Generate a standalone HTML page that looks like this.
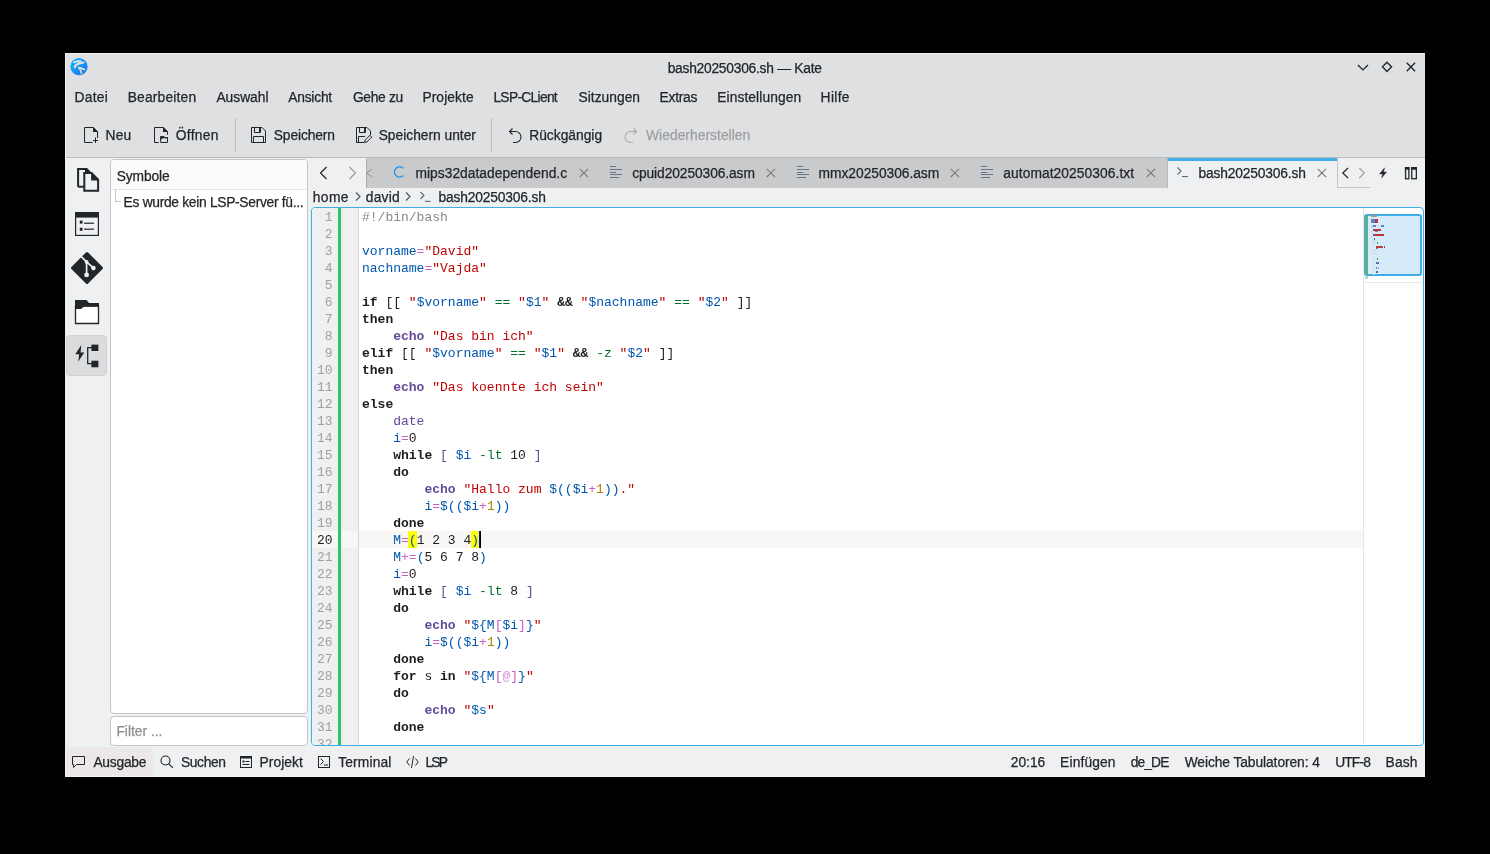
<!DOCTYPE html>
<html><head><meta charset="utf-8"><title>Kate</title>
<style>
html,body{margin:0;padding:0;background:#000;width:1490px;height:854px;overflow:hidden;}
body{position:relative;font-family:"Liberation Sans",sans-serif;}
#root{position:absolute;left:0;top:0;width:1490px;height:854px;will-change:transform;}
.t{position:absolute;white-space:pre;line-height:20px;height:20px;font-family:"Liberation Sans",sans-serif;-webkit-text-stroke:0.25px currentColor;}
.code{position:absolute;white-space:pre;font-family:"Liberation Mono",monospace;}
svg{overflow:visible}
</style></head><body>
<div id="root"><div style="position:absolute;left:65px;top:53px;width:1360px;height:724px;background:#eff0f1;"></div>
<div style="position:absolute;left:65px;top:53px;width:1360px;height:105px;background:#dee0e2;"></div>
<div style="position:absolute;left:65px;top:157px;width:1360px;height:1px;background:#b9bbbd;"></div>
<div style="position:absolute;left:65px;top:53px;width:1360px;height:1px;background:#eceef0;"></div>
<div style="position:absolute;left:65px;top:53px;width:1px;height:724px;background:#eceef0;"></div>
<svg style="position:absolute;left:69px;top:57px;" width="20" height="20" viewBox="0 0 20 20"><defs><linearGradient id="kg" x1="0" y1="0" x2="1" y2="1"><stop offset="0" stop-color="#17b6fb"/><stop offset="1" stop-color="#1a6ff0"/></linearGradient></defs>
<circle cx="10" cy="9.6" r="8.6" fill="url(#kg)"/>
<g fill="none" stroke-linecap="round"><path d="M5 5.3 Q8.2 3.8 11.6 4.1" stroke="#e6e7e8" stroke-width="1.8"/>
<path d="M10.3 4.6 L9.6 6.2" stroke="#cfcfcf" stroke-width="1.6"/>
<path d="M5.8 10.3 Q6.4 7.6 9.5 6.7 Q12.4 5.8 14.6 5.4" stroke="#e4e5e6" stroke-width="2"/>
<path d="M9.6 10.6 Q12.6 11.3 15.4 12.6" stroke="#e2e3e4" stroke-width="1.6"/>
<path d="M10.4 11.2 Q12 13.4 12.3 16" stroke="#d6d3d0" stroke-width="1.9"/></g></svg>
<div class="t" style="left:667.70px;top:58.60px;font-size:13.8px;letter-spacing:-0.251px;color:#232629;">bash20250306.sh — Kate</div>
<svg style="position:absolute;left:1355px;top:60px;" width="15" height="15" viewBox="0 0 15 15"><path d="M2.9 4.9 L7.95 9.9 L13 4.9" fill="none" stroke="#232629" stroke-width="1.35"/></svg>
<svg style="position:absolute;left:1380px;top:60px;" width="15" height="15" viewBox="0 0 15 15"><path d="M7 2.25 L11.6 6.85 L7 11.45 L2.4 6.85 Z" fill="none" stroke="#232629" stroke-width="1.35"/></svg>
<svg style="position:absolute;left:1404px;top:60px;" width="15" height="15" viewBox="0 0 15 15"><path d="M2.7 2.75 L11.1 11.15 M11.1 2.75 L2.7 11.15" fill="none" stroke="#232629" stroke-width="1.35"/></svg>
<div class="t" style="left:74.60px;top:88.40px;font-size:13.8px;letter-spacing:0.262px;color:#232629;">Datei</div>
<div class="t" style="left:127.70px;top:88.40px;font-size:13.8px;letter-spacing:0.186px;color:#232629;">Bearbeiten</div>
<div class="t" style="left:216.40px;top:88.40px;font-size:13.8px;letter-spacing:-0.011px;color:#232629;">Auswahl</div>
<div class="t" style="left:288.20px;top:88.40px;font-size:13.8px;letter-spacing:-0.204px;color:#232629;">Ansicht</div>
<div class="t" style="left:352.91px;top:88.40px;font-size:13.8px;letter-spacing:-0.313px;color:#232629;">Gehe zu</div>
<div class="t" style="left:422.40px;top:88.40px;font-size:13.8px;letter-spacing:0.093px;color:#232629;">Projekte</div>
<div class="t" style="left:493.40px;top:88.40px;font-size:13.8px;letter-spacing:-0.694px;color:#232629;">LSP-CLient</div>
<div class="t" style="left:578.48px;top:88.40px;font-size:13.8px;letter-spacing:0.022px;color:#232629;">Sitzungen</div>
<div class="t" style="left:659.60px;top:88.40px;font-size:13.8px;letter-spacing:-0.267px;color:#232629;">Extras</div>
<div class="t" style="left:717.30px;top:88.40px;font-size:13.8px;letter-spacing:0.078px;color:#232629;">Einstellungen</div>
<div class="t" style="left:820.60px;top:88.40px;font-size:13.8px;letter-spacing:0.331px;color:#232629;">Hilfe</div>
<svg style="position:absolute;left:83px;top:127px;" width="16" height="16" viewBox="0 0 16 16"><path d="M1.5 15.5 V0.5 H10.5 L14.5 4.5 V11" fill="none" stroke="#232629" stroke-width="1"/>
<path d="M1.5 15.5 H9.5" fill="none" stroke="#232629" stroke-width="1"/>
<path d="M10 0 L15 5 L10 5 Z" fill="#232629"/>
<path d="M12.5 10.5 V16 M10 13.5 H15" stroke="#232629" stroke-width="1"/></svg>
<div class="t" style="left:105.50px;top:126.20px;font-size:13.8px;letter-spacing:0.239px;color:#232629;">Neu</div>
<svg style="position:absolute;left:153px;top:127px;" width="17" height="16" viewBox="0 0 17 16"><path d="M1.5 15.5 V0.5 H10.5 L14.5 4.5 V7.7" fill="none" stroke="#232629" stroke-width="1"/>
<path d="M1.5 15.5 H5.8" fill="none" stroke="#232629" stroke-width="1"/>
<path d="M10 0 L15 5 L10 5 Z" fill="#232629"/>
<path d="M7.7 15.5 V9.7 H10.8 L11.8 10.7 H14.5 V15.5 Z" fill="none" stroke="#232629" stroke-width="1"/>
<path d="M7.2 9.2 H11 L12 10.2 H15 V11.2 H9.6 L8.2 12.6 H7.2 Z" fill="#232629"/></svg>
<div class="t" style="left:175.78px;top:126.20px;font-size:13.8px;letter-spacing:0.305px;color:#232629;">Öffnen</div>
<div style="position:absolute;left:235px;top:118px;width:1px;height:34px;background:#b9bbbd;"></div>
<svg style="position:absolute;left:250px;top:127px;" width="17" height="16" viewBox="0 0 17 16"><path d="M1.5 0.5 H12 L15.5 4 V15.5 H1.5 Z" fill="none" stroke="#232629" stroke-width="1"/>
<path d="M4.5 0.5 V5.5 H10.5 V0.5" fill="none" stroke="#232629" stroke-width="1"/>
<path d="M9 1 H11 V5 H9Z" fill="#232629"/>
<path d="M3.5 15.5 V9.5 H13.5 V15.5" fill="none" stroke="#232629" stroke-width="1"/></svg>
<div class="t" style="left:273.78px;top:126.20px;font-size:13.8px;letter-spacing:-0.123px;color:#232629;">Speichern</div>
<svg style="position:absolute;left:355px;top:127px;" width="18" height="16" viewBox="0 0 18 16"><path d="M9 15.5 H1.5 V0.5 H12 L15.5 4 V8" fill="none" stroke="#232629" stroke-width="1"/>
<path d="M4.5 0.5 V5.5 H10.5 V0.5" fill="none" stroke="#232629" stroke-width="1"/>
<path d="M9 1 H11 V5 H9Z" fill="#232629"/>
<path d="M3.5 15.5 V9.5 H10" fill="none" stroke="#232629" stroke-width="1"/>
<path d="M9.5 15.5 L10.2 13 L15 8.3 L16.8 10.1 L12 14.8 Z" fill="none" stroke="#232629" stroke-width="1"/></svg>
<div class="t" style="left:378.68px;top:126.20px;font-size:13.8px;letter-spacing:-0.009px;color:#232629;">Speichern unter</div>
<div style="position:absolute;left:491px;top:118px;width:1px;height:34px;background:#b9bbbd;"></div>
<svg style="position:absolute;left:507px;top:126px;" width="16" height="18" viewBox="0 0 16 18"><path d="M3 5.5 H8.5 A5.5 5.5 0 0 1 8.5 16.5 H6" fill="none" stroke="#232629" stroke-width="1.1"/>
<path d="M5.5 2.5 L2.5 5.5 L5.5 8.5" fill="none" stroke="#232629" stroke-width="1.1"/></svg>
<div class="t" style="left:529.20px;top:126.20px;font-size:13.8px;letter-spacing:0.004px;color:#232629;">Rückgängig</div>
<svg style="position:absolute;left:623px;top:126px;" width="16" height="18" viewBox="0 0 16 18"><path d="M13 5.5 H7.5 A5.5 5.5 0 0 0 7.5 16.5 H10" fill="none" stroke="#a7a9ab" stroke-width="1.1"/>
<path d="M10.5 2.5 L13.5 5.5 L10.5 8.5" fill="none" stroke="#a7a9ab" stroke-width="1.1"/></svg>
<div class="t" style="left:646.03px;top:126.20px;font-size:13.8px;letter-spacing:0.046px;color:#9d9fa1;">Wiederherstellen</div>
<svg style="position:absolute;left:70px;top:162px;" width="36" height="36" viewBox="0 0 36 36"><path d="M8.1 24.7 V7.1 H16.6 L20.3 10.8" fill="none" stroke="#232629" stroke-width="2"/>
<path d="M8.1 24.7 H14" fill="none" stroke="#232629" stroke-width="2"/>
<path d="M15 6.1 L20.8 11.1 H15 Z" fill="#232629"/>
<path d="M14.3 11.1 H21.6 L28.1 17.6 V28.7 H14.3 Z" fill="#eff0f1" stroke="#232629" stroke-width="2"/>
<path d="M21.1 10.1 L29.1 18.1 V18.6 H21.1 Z" fill="#232629"/></svg>
<svg style="position:absolute;left:75px;top:212px;" width="24" height="24" viewBox="0 0 24 24"><rect x="0.6" y="0.6" width="22.8" height="22.8" fill="none" stroke="#232629" stroke-width="1.2"/>
<rect x="0" y="0" width="24" height="5.6" fill="#232629"/>
<rect x="4.8" y="8.6" width="2.7" height="3" fill="#232629"/><rect x="9" y="10.6" width="10" height="1.2" fill="#232629"/>
<rect x="4.8" y="15.8" width="2.7" height="3" fill="#232629"/><rect x="9" y="16.6" width="10" height="1.2" fill="#232629"/></svg>
<svg style="position:absolute;left:70px;top:251px;" width="34" height="34" viewBox="0 0 34 34"><path d="M17 2.5 L31.5 17 L17 31.5 L2.5 17 Z" fill="#232629" stroke="#232629" stroke-width="3" stroke-linejoin="round"/>
<path d="M10.8 5.2 L16.6 10.8 V23.6 M16.6 10.8 L23.3 16.9" fill="none" stroke="#eff0f1" stroke-width="1.7"/>
<circle cx="16.6" cy="10.9" r="1.9" fill="#eff0f1"/><circle cx="23.4" cy="17.1" r="2.3" fill="#eff0f1"/><circle cx="16.6" cy="23.9" r="2.4" fill="#eff0f1"/></svg>
<svg style="position:absolute;left:74px;top:299px;" width="26" height="26" viewBox="0 0 26 26"><path d="M1.5 7 H24.5 V24.5 H1.5 Z" fill="#ffffff" stroke="#232629" stroke-width="1.3"/>
<path d="M1 1 H12.5 L15 4 H25 V7.5 H10.2 L7 10 H1 Z" fill="#232629"/></svg>
<div style="position:absolute;left:66px;top:335px;width:41px;height:41px;background:#dadcde;border:1px solid #cfd1d3;border-radius:4px;box-sizing:border-box;"></div>
<svg style="position:absolute;left:74px;top:343px;" width="26" height="26" viewBox="0 0 26 26"><path d="M7.3 2 L1.3 11.3 H5.1 L4.3 18.4 L10.3 9.5 H6.6 Z" fill="#232629"/>
<path d="M18 4.7 H13.7 V20.7 H18" fill="none" stroke="#232629" stroke-width="1.3"/>
<rect x="17.4" y="1.6" width="7" height="6.4" fill="#232629"/><rect x="17.4" y="17.7" width="7" height="6.6" fill="#232629"/></svg>
<div style="position:absolute;left:110px;top:159px;width:198px;height:555px;background:#ffffff;border:1px solid #c3c5c7;border-radius:4px;box-sizing:border-box;"></div>
<div style="position:absolute;left:111px;top:160px;width:196px;height:29px;background:#fbfbfb;border-radius:3px 3px 0 0;"></div>
<div style="position:absolute;left:111px;top:189px;width:196px;height:1px;background:#e4e5e6;"></div>
<div class="t" style="left:116.78px;top:166.60px;font-size:13.8px;letter-spacing:-0.123px;color:#232629;">Symbole</div>
<div style="position:absolute;left:115px;top:190px;width:1px;height:12px;background:#c8c9ca;"></div>
<div style="position:absolute;left:115px;top:201px;width:6px;height:1px;background:#c8c9ca;"></div>
<div class="t" style="left:123.60px;top:193.40px;font-size:13.8px;letter-spacing:-0.300px;color:#232629;">Es wurde kein LSP-Server fü...</div>
<div style="position:absolute;left:110px;top:716px;width:198px;height:30px;background:#ffffff;border:1px solid #c3c5c7;border-radius:4px;box-sizing:border-box;"></div>
<div class="t" style="left:116.40px;top:722.30px;font-size:13.8px;letter-spacing:-0.001px;color:#8d8f91;">Filter ...</div>
<div style="position:absolute;left:366px;top:158px;width:802px;height:30px;background:#c9cacc;"></div>
<svg style="position:absolute;left:318px;top:165px;" width="12" height="16" viewBox="0 0 12 16"><path d="M8.5 2 L2.5 8 L8.5 14" fill="none" stroke="#232629" stroke-width="1.2"/></svg>
<svg style="position:absolute;left:346px;top:165px;" width="12" height="16" viewBox="0 0 12 16"><path d="M3.5 2 L9.5 8 L3.5 14" fill="none" stroke="#9a9c9e" stroke-width="1.2"/></svg>
<svg style="position:absolute;left:366px;top:167px;" width="8" height="12" viewBox="0 0 8 12"><path d="M5.8 2 L0.6 6 L5.8 9.8" fill="none" stroke="#8f9193" stroke-width="1"/></svg>
<div style="position:absolute;left:366px;top:159px;width:1px;height:29px;background:#a9abad;"></div>
<svg style="position:absolute;left:392px;top:165px;" width="14" height="14" viewBox="0 0 14 14"><path d="M11.3 3.2 A5.2 5.2 0 1 0 11.3 10.6" fill="none" stroke="#1d99f3" stroke-width="1.4"/></svg>
<div class="t" style="left:415.50px;top:163.70px;font-size:13.8px;letter-spacing:0.023px;color:#232629;">mips32datadependend.c</div>
<svg style="position:absolute;left:578px;top:167px;" width="12" height="12" viewBox="0 0 12 12"><path d="M1.8 1.8 L10 10 M10 1.8 L1.8 10" fill="none" stroke="#7b7d7f" stroke-width="1.1"/></svg>
<svg style="position:absolute;left:610px;top:166px;" width="13" height="12" viewBox="0 0 13 12"><rect x="0" y="0" width="6" height="1" fill="#63768a"/><rect x="0" y="3" width="12" height="1" fill="#63768a"/><rect x="0" y="6" width="6" height="1" fill="#63768a"/><rect x="0" y="8" width="12" height="1" fill="#63768a"/><rect x="0" y="11" width="9" height="1" fill="#63768a"/></svg>
<div class="t" style="left:632.15px;top:163.70px;font-size:13.8px;letter-spacing:-0.093px;color:#232629;">cpuid20250306.asm</div>
<svg style="position:absolute;left:765px;top:167px;" width="12" height="12" viewBox="0 0 12 12"><path d="M1.8 1.8 L10 10 M10 1.8 L1.8 10" fill="none" stroke="#7b7d7f" stroke-width="1.1"/></svg>
<svg style="position:absolute;left:797px;top:166px;" width="13" height="12" viewBox="0 0 13 12"><rect x="0" y="0" width="6" height="1" fill="#63768a"/><rect x="0" y="3" width="12" height="1" fill="#63768a"/><rect x="0" y="6" width="6" height="1" fill="#63768a"/><rect x="0" y="8" width="12" height="1" fill="#63768a"/><rect x="0" y="11" width="9" height="1" fill="#63768a"/></svg>
<div class="t" style="left:818.60px;top:163.70px;font-size:13.8px;letter-spacing:-0.039px;color:#232629;">mmx20250306.asm</div>
<svg style="position:absolute;left:949px;top:167px;" width="12" height="12" viewBox="0 0 12 12"><path d="M1.8 1.8 L10 10 M10 1.8 L1.8 10" fill="none" stroke="#7b7d7f" stroke-width="1.1"/></svg>
<svg style="position:absolute;left:981px;top:166px;" width="13" height="12" viewBox="0 0 13 12"><rect x="0" y="0" width="6" height="1" fill="#63768a"/><rect x="0" y="3" width="12" height="1" fill="#63768a"/><rect x="0" y="6" width="6" height="1" fill="#63768a"/><rect x="0" y="8" width="12" height="1" fill="#63768a"/><rect x="0" y="11" width="9" height="1" fill="#63768a"/></svg>
<div class="t" style="left:1003.25px;top:163.70px;font-size:13.8px;letter-spacing:0.071px;color:#232629;">automat20250306.txt</div>
<svg style="position:absolute;left:1145px;top:167px;" width="12" height="12" viewBox="0 0 12 12"><path d="M1.8 1.8 L10 10 M10 1.8 L1.8 10" fill="none" stroke="#7b7d7f" stroke-width="1.1"/></svg>
<div style="position:absolute;left:1167px;top:158px;width:171px;height:30px;background:#eff0f1;"></div>
<div style="position:absolute;left:1167px;top:158px;width:171px;height:3px;background:#3daee9;border-radius:2px 2px 0 0;"></div>
<div style="position:absolute;left:1337px;top:158px;width:1px;height:30px;background:#c3c5c7;"></div>
<div style="position:absolute;left:1167px;top:160px;width:1px;height:28px;background:#b9bbbd;"></div>
<div style="position:absolute;left:1337px;top:187px;width:33px;height:1px;background:#c3c5c7;"></div>
<svg style="position:absolute;left:1176px;top:166px;" width="14" height="13" viewBox="0 0 14 13"><path d="M1.5 1.5 L5 5 L1.5 8.5" fill="none" stroke="#5a6b7c" stroke-width="1.1"/><rect x="6" y="10" width="6" height="1.1" fill="#5a6b7c"/></svg>
<div class="t" style="left:1198.60px;top:163.70px;font-size:13.8px;letter-spacing:-0.173px;color:#232629;">bash20250306.sh</div>
<svg style="position:absolute;left:1316px;top:167px;" width="12" height="12" viewBox="0 0 12 12"><path d="M1.8 1.8 L10 10 M10 1.8 L1.8 10" fill="none" stroke="#7b7d7f" stroke-width="1.1"/></svg>
<svg style="position:absolute;left:1340px;top:165px;" width="12" height="16" viewBox="0 0 12 16"><path d="M8 3 L2.8 8 L8 13" fill="none" stroke="#232629" stroke-width="1.2"/></svg>
<svg style="position:absolute;left:1356px;top:165px;" width="12" height="16" viewBox="0 0 12 16"><path d="M3.3 3 L8.3 8 L3.3 13" fill="none" stroke="#9a9c9e" stroke-width="1.1"/></svg>
<svg style="position:absolute;left:1378px;top:167px;" width="10" height="12" viewBox="0 0 10 12"><path d="M6.6 0.8 L1.5 6.9 H4.6 L3.6 11 L8.5 5 H5.5 Z" fill="#232629" stroke="#232629" stroke-width="0.4" stroke-linejoin="round"/></svg>
<svg style="position:absolute;left:1404px;top:167px;" width="14" height="13" viewBox="0 0 14 13"><rect x="1.55" y="0.75" width="3.3" height="11" fill="none" stroke="#232629" stroke-width="1.3"/><rect x="0.9" y="0.1" width="4.6" height="2.6" fill="#232629"/><rect x="7.75" y="0.75" width="4.6" height="11" fill="none" stroke="#232629" stroke-width="1.3"/><rect x="7.1" y="0.1" width="5.9" height="2.6" fill="#232629"/></svg>
<div class="t" style="left:312.73px;top:187.80px;font-size:13.8px;letter-spacing:0.429px;color:#232629;">home</div>
<svg style="position:absolute;left:354px;top:190px;" width="8" height="12" viewBox="0 0 8 12"><path d="M2 2.5 L6 6.5 L2 10.5" fill="none" stroke="#4d5358" stroke-width="1.1"/></svg>
<div class="t" style="left:365.85px;top:187.80px;font-size:13.8px;letter-spacing:0.192px;color:#232629;">david</div>
<svg style="position:absolute;left:404px;top:190px;" width="8" height="12" viewBox="0 0 8 12"><path d="M2 2.5 L6 6.5 L2 10.5" fill="none" stroke="#4d5358" stroke-width="1.1"/></svg>
<svg style="position:absolute;left:419px;top:191px;" width="13" height="12" viewBox="0 0 13 12"><path d="M1.5 1 L5 4.5 L1.5 8" fill="none" stroke="#5a6b7c" stroke-width="1.1"/><rect x="6" y="9.8" width="5.5" height="1.1" fill="#5a6b7c"/></svg>
<div class="t" style="left:438.40px;top:187.80px;font-size:13.8px;letter-spacing:-0.158px;color:#232629;">bash20250306.sh</div>
<div style="position:absolute;left:66px;top:747px;width:87px;height:29px;background:#ebe8e7;border-radius:4px;"></div>
<svg style="position:absolute;left:72px;top:756px;" width="14" height="13" viewBox="0 0 14 13"><path d="M0.5 0.5 H12.5 V8.5 H4.5 L1.5 11.5 V8.5 H0.5 Z" fill="none" stroke="#232629" stroke-width="1"/></svg>
<div class="t" style="left:93.40px;top:753.20px;font-size:13.8px;letter-spacing:-0.237px;color:#232629;">Ausgabe</div>
<svg style="position:absolute;left:160px;top:755px;" width="14" height="14" viewBox="0 0 14 14"><circle cx="5.5" cy="5.5" r="4.5" fill="none" stroke="#232629" stroke-width="1.1"/><path d="M8.8 8.8 L12.8 12.8" stroke="#232629" stroke-width="1.2"/></svg>
<div class="t" style="left:180.88px;top:753.20px;font-size:13.8px;letter-spacing:-0.333px;color:#232629;">Suchen</div>
<svg style="position:absolute;left:240px;top:756px;" width="12" height="12" viewBox="0 0 12 12"><rect x="0.5" y="0.5" width="11" height="11" fill="none" stroke="#232629" stroke-width="1"/><rect x="0" y="0" width="12" height="2.5" fill="#232629"/><rect x="2.5" y="4.5" width="2" height="2" fill="#232629"/><rect x="5.5" y="5" width="4" height="1" fill="#232629"/><rect x="2.5" y="8" width="7" height="1" fill="#232629"/></svg>
<div class="t" style="left:259.50px;top:753.20px;font-size:13.8px;letter-spacing:0.076px;color:#232629;">Projekt</div>
<svg style="position:absolute;left:318px;top:756px;" width="12" height="12" viewBox="0 0 12 12"><rect x="0.5" y="0.5" width="11" height="11" fill="none" stroke="#232629" stroke-width="1"/><path d="M2.5 2.5 L5.5 5.5 L2.5 8.5" fill="none" stroke="#232629" stroke-width="1"/><rect x="6" y="8.5" width="4" height="1" fill="#232629"/></svg>
<div class="t" style="left:338.22px;top:753.20px;font-size:13.8px;letter-spacing:0.154px;color:#232629;">Terminal</div>
<svg style="position:absolute;left:406px;top:755px;" width="13" height="14" viewBox="0 0 13 14"><path d="M3.5 3.5 L0.8 7 L3.5 10.5 M9.5 3.5 L12.2 7 L9.5 10.5 M7.5 1 L5.5 13" fill="none" stroke="#232629" stroke-width="1"/></svg>
<div class="t" style="left:425.40px;top:753.20px;font-size:13.8px;letter-spacing:-1.794px;color:#232629;">LSP</div>
<div class="t" style="left:1010.81px;top:753.20px;font-size:13.8px;letter-spacing:-0.014px;color:#232629;">20:16</div>
<div class="t" style="left:1060.10px;top:753.20px;font-size:13.8px;letter-spacing:0.137px;color:#232629;">Einfügen</div>
<div class="t" style="left:1130.75px;top:753.20px;font-size:13.8px;letter-spacing:-0.889px;color:#232629;">de_DE</div>
<div class="t" style="left:1184.63px;top:753.20px;font-size:13.8px;letter-spacing:-0.077px;color:#232629;">Weiche Tabulatoren: 4</div>
<div class="t" style="left:1335.16px;top:753.20px;font-size:13.8px;letter-spacing:-0.842px;color:#232629;">UTF-8</div>
<div class="t" style="left:1385.60px;top:753.20px;font-size:13.8px;letter-spacing:0.112px;color:#232629;">Bash</div>
<div style="position:absolute;left:311px;top:207px;width:1113px;height:539px;background:#ffffff;border:1px solid #3daee9;border-radius:4px;box-sizing:border-box;"></div>
<div style="position:absolute;left:312px;top:208px;width:26px;height:537px;background:#f0f0f0;border-radius:3px 0 0 3px;"></div>
<div style="position:absolute;left:341px;top:208px;width:17px;height:537px;background:#f0f0f0;"></div>
<div style="position:absolute;left:358px;top:208px;width:1px;height:537px;background:#d8d8d8;"></div>
<div style="position:absolute;left:312px;top:531px;width:26px;height:17px;background:#f8f7f6;"></div>
<div style="position:absolute;left:341px;top:531px;width:17px;height:17px;background:#f8f7f6;"></div>
<div style="position:absolute;left:359px;top:531px;width:1004px;height:17px;background:#f8f7f6;"></div>
<div style="position:absolute;left:338px;top:208px;width:3px;height:537px;background:#2ecc71;background:#27c964;"></div>
<div style="position:absolute;left:408px;top:531px;width:9px;height:17px;background:#ffff00;"></div>
<div style="position:absolute;left:471px;top:531px;width:8px;height:17px;background:#ffff00;"></div>
<div style="position:absolute;left:0;top:0;width:1490px;height:745px;overflow:hidden;font-family:'Liberation Mono',monospace;font-size:13px;white-space:pre"><div style="position:absolute;left:300px;width:32.5px;text-align:right;top:209px;height:17px;line-height:17px;color:#a0a0a0">1</div><div style="position:absolute;left:300px;width:32.5px;text-align:right;top:226px;height:17px;line-height:17px;color:#a0a0a0">2</div><div style="position:absolute;left:300px;width:32.5px;text-align:right;top:243px;height:17px;line-height:17px;color:#a0a0a0">3</div><div style="position:absolute;left:300px;width:32.5px;text-align:right;top:260px;height:17px;line-height:17px;color:#a0a0a0">4</div><div style="position:absolute;left:300px;width:32.5px;text-align:right;top:277px;height:17px;line-height:17px;color:#a0a0a0">5</div><div style="position:absolute;left:300px;width:32.5px;text-align:right;top:294px;height:17px;line-height:17px;color:#a0a0a0">6</div><div style="position:absolute;left:300px;width:32.5px;text-align:right;top:311px;height:17px;line-height:17px;color:#a0a0a0">7</div><div style="position:absolute;left:300px;width:32.5px;text-align:right;top:328px;height:17px;line-height:17px;color:#a0a0a0">8</div><div style="position:absolute;left:300px;width:32.5px;text-align:right;top:345px;height:17px;line-height:17px;color:#a0a0a0">9</div><div style="position:absolute;left:300px;width:32.5px;text-align:right;top:362px;height:17px;line-height:17px;color:#a0a0a0">10</div><div style="position:absolute;left:300px;width:32.5px;text-align:right;top:379px;height:17px;line-height:17px;color:#a0a0a0">11</div><div style="position:absolute;left:300px;width:32.5px;text-align:right;top:396px;height:17px;line-height:17px;color:#a0a0a0">12</div><div style="position:absolute;left:300px;width:32.5px;text-align:right;top:413px;height:17px;line-height:17px;color:#a0a0a0">13</div><div style="position:absolute;left:300px;width:32.5px;text-align:right;top:430px;height:17px;line-height:17px;color:#a0a0a0">14</div><div style="position:absolute;left:300px;width:32.5px;text-align:right;top:447px;height:17px;line-height:17px;color:#a0a0a0">15</div><div style="position:absolute;left:300px;width:32.5px;text-align:right;top:464px;height:17px;line-height:17px;color:#a0a0a0">16</div><div style="position:absolute;left:300px;width:32.5px;text-align:right;top:481px;height:17px;line-height:17px;color:#a0a0a0">17</div><div style="position:absolute;left:300px;width:32.5px;text-align:right;top:498px;height:17px;line-height:17px;color:#a0a0a0">18</div><div style="position:absolute;left:300px;width:32.5px;text-align:right;top:515px;height:17px;line-height:17px;color:#a0a0a0">19</div><div style="position:absolute;left:300px;width:32.5px;text-align:right;top:532px;height:17px;line-height:17px;color:#1e1e1e">20</div><div style="position:absolute;left:300px;width:32.5px;text-align:right;top:549px;height:17px;line-height:17px;color:#a0a0a0">21</div><div style="position:absolute;left:300px;width:32.5px;text-align:right;top:566px;height:17px;line-height:17px;color:#a0a0a0">22</div><div style="position:absolute;left:300px;width:32.5px;text-align:right;top:583px;height:17px;line-height:17px;color:#a0a0a0">23</div><div style="position:absolute;left:300px;width:32.5px;text-align:right;top:600px;height:17px;line-height:17px;color:#a0a0a0">24</div><div style="position:absolute;left:300px;width:32.5px;text-align:right;top:617px;height:17px;line-height:17px;color:#a0a0a0">25</div><div style="position:absolute;left:300px;width:32.5px;text-align:right;top:634px;height:17px;line-height:17px;color:#a0a0a0">26</div><div style="position:absolute;left:300px;width:32.5px;text-align:right;top:651px;height:17px;line-height:17px;color:#a0a0a0">27</div><div style="position:absolute;left:300px;width:32.5px;text-align:right;top:668px;height:17px;line-height:17px;color:#a0a0a0">28</div><div style="position:absolute;left:300px;width:32.5px;text-align:right;top:685px;height:17px;line-height:17px;color:#a0a0a0">29</div><div style="position:absolute;left:300px;width:32.5px;text-align:right;top:702px;height:17px;line-height:17px;color:#a0a0a0">30</div><div style="position:absolute;left:300px;width:32.5px;text-align:right;top:719px;height:17px;line-height:17px;color:#a0a0a0">31</div><div style="position:absolute;left:300px;width:32.5px;text-align:right;top:736px;height:17px;line-height:17px;color:#a0a0a0">32</div><div style="position:absolute;left:362px;top:0"><div style="position:absolute;left:0;top:209px;height:17px;line-height:17px"><span style="color:#898887;">#!/bin/bash</span></div><div style="position:absolute;left:0;top:243px;height:17px;line-height:17px"><span style="color:#0057ae;">vorname</span><span style="color:#ca60ca;">=</span><span style="color:#bf0303;">&quot;David&quot;</span></div><div style="position:absolute;left:0;top:260px;height:17px;line-height:17px"><span style="color:#0057ae;">nachname</span><span style="color:#ca60ca;">=</span><span style="color:#bf0303;">&quot;Vajda&quot;</span></div><div style="position:absolute;left:0;top:294px;height:17px;line-height:17px"><span style="color:#1f1c1b;font-weight:bold;">if</span><span style="color:#1f1c1b;"> [[ </span><span style="color:#bf0303;">&quot;</span><span style="color:#0057ae;">$vorname</span><span style="color:#bf0303;">&quot;</span><span style="color:#1f1c1b;"> </span><span style="color:#006e28;">==</span><span style="color:#1f1c1b;"> </span><span style="color:#bf0303;">&quot;</span><span style="color:#0057ae;">$1</span><span style="color:#bf0303;">&quot;</span><span style="color:#1f1c1b;"> </span><span style="color:#1f1c1b;font-weight:bold;">&amp;&amp;</span><span style="color:#1f1c1b;"> </span><span style="color:#bf0303;">&quot;</span><span style="color:#0057ae;">$nachname</span><span style="color:#bf0303;">&quot;</span><span style="color:#1f1c1b;"> </span><span style="color:#006e28;">==</span><span style="color:#1f1c1b;"> </span><span style="color:#bf0303;">&quot;</span><span style="color:#0057ae;">$2</span><span style="color:#bf0303;">&quot;</span><span style="color:#1f1c1b;"> ]]</span></div><div style="position:absolute;left:0;top:311px;height:17px;line-height:17px"><span style="color:#1f1c1b;font-weight:bold;">then</span></div><div style="position:absolute;left:0;top:328px;height:17px;line-height:17px"><span style="color:#1f1c1b;">    </span><span style="color:#644a9b;font-weight:bold;">echo</span><span style="color:#bf0303;"> &quot;Das bin ich&quot;</span></div><div style="position:absolute;left:0;top:345px;height:17px;line-height:17px"><span style="color:#1f1c1b;font-weight:bold;">elif</span><span style="color:#1f1c1b;"> [[ </span><span style="color:#bf0303;">&quot;</span><span style="color:#0057ae;">$vorname</span><span style="color:#bf0303;">&quot;</span><span style="color:#1f1c1b;"> </span><span style="color:#006e28;">==</span><span style="color:#1f1c1b;"> </span><span style="color:#bf0303;">&quot;</span><span style="color:#0057ae;">$1</span><span style="color:#bf0303;">&quot;</span><span style="color:#1f1c1b;"> </span><span style="color:#1f1c1b;font-weight:bold;">&amp;&amp;</span><span style="color:#1f1c1b;"> </span><span style="color:#006e28;">-z</span><span style="color:#1f1c1b;"> </span><span style="color:#bf0303;">&quot;</span><span style="color:#0057ae;">$2</span><span style="color:#bf0303;">&quot;</span><span style="color:#1f1c1b;"> ]]</span></div><div style="position:absolute;left:0;top:362px;height:17px;line-height:17px"><span style="color:#1f1c1b;font-weight:bold;">then</span></div><div style="position:absolute;left:0;top:379px;height:17px;line-height:17px"><span style="color:#1f1c1b;">    </span><span style="color:#644a9b;font-weight:bold;">echo</span><span style="color:#bf0303;"> &quot;Das koennte ich sein&quot;</span></div><div style="position:absolute;left:0;top:396px;height:17px;line-height:17px"><span style="color:#1f1c1b;font-weight:bold;">else</span></div><div style="position:absolute;left:0;top:413px;height:17px;line-height:17px"><span style="color:#1f1c1b;">    </span><span style="color:#644a9b;">date</span></div><div style="position:absolute;left:0;top:430px;height:17px;line-height:17px"><span style="color:#1f1c1b;">    </span><span style="color:#0057ae;">i</span><span style="color:#ca60ca;">=</span><span style="color:#1f1c1b;">0</span></div><div style="position:absolute;left:0;top:447px;height:17px;line-height:17px"><span style="color:#1f1c1b;">    </span><span style="color:#1f1c1b;font-weight:bold;">while</span><span style="color:#1f1c1b;"> </span><span style="color:#644a9b;">[</span><span style="color:#1f1c1b;"> </span><span style="color:#0057ae;">$i</span><span style="color:#1f1c1b;"> </span><span style="color:#006e28;">-lt</span><span style="color:#1f1c1b;"> 10 </span><span style="color:#644a9b;">]</span></div><div style="position:absolute;left:0;top:464px;height:17px;line-height:17px"><span style="color:#1f1c1b;">    </span><span style="color:#1f1c1b;font-weight:bold;">do</span></div><div style="position:absolute;left:0;top:481px;height:17px;line-height:17px"><span style="color:#1f1c1b;">        </span><span style="color:#644a9b;font-weight:bold;">echo</span><span style="color:#bf0303;"> &quot;Hallo zum </span><span style="color:#0057ae;">$((</span><span style="color:#0057ae;">$i</span><span style="color:#ca60ca;">+</span><span style="color:#b08000;">1</span><span style="color:#0057ae;">))</span><span style="color:#bf0303;">.&quot;</span></div><div style="position:absolute;left:0;top:498px;height:17px;line-height:17px"><span style="color:#1f1c1b;">        </span><span style="color:#0057ae;">i</span><span style="color:#ca60ca;">=</span><span style="color:#0057ae;">$((</span><span style="color:#0057ae;">$i</span><span style="color:#ca60ca;">+</span><span style="color:#b08000;">1</span><span style="color:#0057ae;">))</span></div><div style="position:absolute;left:0;top:515px;height:17px;line-height:17px"><span style="color:#1f1c1b;">    </span><span style="color:#1f1c1b;font-weight:bold;">done</span></div><div style="position:absolute;left:0;top:532px;height:17px;line-height:17px"><span style="color:#1f1c1b;">    </span><span style="color:#0057ae;">M</span><span style="color:#ca60ca;">=</span><span style="color:#0057ae;">(</span><span style="color:#1f1c1b;">1 2 3 4</span><span style="color:#0057ae;">)</span></div><div style="position:absolute;left:0;top:549px;height:17px;line-height:17px"><span style="color:#1f1c1b;">    </span><span style="color:#0057ae;">M</span><span style="color:#ca60ca;">+=</span><span style="color:#0057ae;">(</span><span style="color:#1f1c1b;">5 6 7 8</span><span style="color:#0057ae;">)</span></div><div style="position:absolute;left:0;top:566px;height:17px;line-height:17px"><span style="color:#1f1c1b;">    </span><span style="color:#0057ae;">i</span><span style="color:#ca60ca;">=</span><span style="color:#1f1c1b;">0</span></div><div style="position:absolute;left:0;top:583px;height:17px;line-height:17px"><span style="color:#1f1c1b;">    </span><span style="color:#1f1c1b;font-weight:bold;">while</span><span style="color:#1f1c1b;"> </span><span style="color:#644a9b;">[</span><span style="color:#1f1c1b;"> </span><span style="color:#0057ae;">$i</span><span style="color:#1f1c1b;"> </span><span style="color:#006e28;">-lt</span><span style="color:#1f1c1b;"> 8 </span><span style="color:#644a9b;">]</span></div><div style="position:absolute;left:0;top:600px;height:17px;line-height:17px"><span style="color:#1f1c1b;">    </span><span style="color:#1f1c1b;font-weight:bold;">do</span></div><div style="position:absolute;left:0;top:617px;height:17px;line-height:17px"><span style="color:#1f1c1b;">        </span><span style="color:#644a9b;font-weight:bold;">echo</span><span style="color:#1f1c1b;"> </span><span style="color:#bf0303;">&quot;</span><span style="color:#0057ae;">${M</span><span style="color:#ca60ca;">[</span><span style="color:#0057ae;">$i</span><span style="color:#ca60ca;">]</span><span style="color:#0057ae;">}</span><span style="color:#bf0303;">&quot;</span></div><div style="position:absolute;left:0;top:634px;height:17px;line-height:17px"><span style="color:#1f1c1b;">        </span><span style="color:#0057ae;">i</span><span style="color:#ca60ca;">=</span><span style="color:#0057ae;">$((</span><span style="color:#0057ae;">$i</span><span style="color:#ca60ca;">+</span><span style="color:#b08000;">1</span><span style="color:#0057ae;">))</span></div><div style="position:absolute;left:0;top:651px;height:17px;line-height:17px"><span style="color:#1f1c1b;">    </span><span style="color:#1f1c1b;font-weight:bold;">done</span></div><div style="position:absolute;left:0;top:668px;height:17px;line-height:17px"><span style="color:#1f1c1b;">    </span><span style="color:#1f1c1b;font-weight:bold;">for</span><span style="color:#1f1c1b;"> s </span><span style="color:#1f1c1b;font-weight:bold;">in</span><span style="color:#1f1c1b;"> </span><span style="color:#bf0303;">&quot;</span><span style="color:#0057ae;">${M</span><span style="color:#ca60ca;">[</span><span style="color:#d78fd7;">@</span><span style="color:#ca60ca;">]</span><span style="color:#0057ae;">}</span><span style="color:#bf0303;">&quot;</span></div><div style="position:absolute;left:0;top:685px;height:17px;line-height:17px"><span style="color:#1f1c1b;">    </span><span style="color:#1f1c1b;font-weight:bold;">do</span></div><div style="position:absolute;left:0;top:702px;height:17px;line-height:17px"><span style="color:#1f1c1b;">        </span><span style="color:#644a9b;font-weight:bold;">echo</span><span style="color:#1f1c1b;"> </span><span style="color:#bf0303;">&quot;</span><span style="color:#0057ae;">$s</span><span style="color:#bf0303;">&quot;</span></div><div style="position:absolute;left:0;top:719px;height:17px;line-height:17px"><span style="color:#1f1c1b;">    </span><span style="color:#1f1c1b;font-weight:bold;">done</span></div></div></div>
<div style="position:absolute;left:479px;top:531px;width:1px;height:17px;background:#0000ff;"></div>
<div style="position:absolute;left:480px;top:531px;width:1px;height:17px;background:#000000;"></div>
<div style="position:absolute;left:1363px;top:208px;width:1px;height:537px;background:#e6e6e6;"></div>
<div style="position:absolute;left:1364px;top:214px;width:58px;height:62px;background:#d6ebf9;border:2px solid #3daee9;border-radius:3px;box-sizing:border-box;"></div>
<div style="position:absolute;left:1365px;top:215px;width:3px;height:60px;background:#5fae8a;"></div>
<div style="position:absolute;left:1365px;top:276px;width:3px;height:3px;background:#b5dcc2;"></div>
<div style="position:absolute;left:1364px;top:282px;width:58px;height:1px;background:#e9e9e9;"></div>
<div style="position:absolute;left:1371px;top:215px;width:6px;height:2px;background:#9c9c9c;"></div>
<div style="position:absolute;left:1371px;top:219px;width:4px;height:4px;background:#4f88c6;"></div>
<div style="position:absolute;left:1375px;top:219px;width:3px;height:4px;background:#c0353a;"></div>
<div style="position:absolute;left:1371px;top:225px;width:2px;height:2px;background:#cfcfcf;"></div>
<div style="position:absolute;left:1373px;top:225px;width:3px;height:2px;background:#4f88c6;"></div>
<div style="position:absolute;left:1377px;top:225px;width:2px;height:1px;background:#cfcfcf;"></div>
<div style="position:absolute;left:1381px;top:225px;width:3px;height:2px;background:#4f88c6;"></div>
<div style="position:absolute;left:1371px;top:227px;width:2px;height:1px;background:#cfcfcf;"></div>
<div style="position:absolute;left:1374px;top:229px;width:7px;height:2px;background:#c0353a;"></div>
<div style="position:absolute;left:1373px;top:229px;width:1px;height:2px;background:#7061a6;"></div>
<div style="position:absolute;left:1371px;top:231px;width:2px;height:1px;background:#cfcfcf;"></div>
<div style="position:absolute;left:1375px;top:231px;width:3px;height:1px;background:#4f88c6;"></div>
<div style="position:absolute;left:1371px;top:233px;width:2px;height:1px;background:#cfcfcf;"></div>
<div style="position:absolute;left:1374px;top:234px;width:10px;height:2px;background:#c0353a;"></div>
<div style="position:absolute;left:1373px;top:234px;width:1px;height:2px;background:#7061a6;"></div>
<div style="position:absolute;left:1371px;top:236px;width:2px;height:1px;background:#cfcfcf;"></div>
<div style="position:absolute;left:1374px;top:238px;width:1px;height:2px;background:#7061a6;"></div>
<div style="position:absolute;left:1373px;top:240px;width:1px;height:1px;background:#cfcfcf;"></div>
<div style="position:absolute;left:1373px;top:242px;width:2px;height:1px;background:#cfcfcf;"></div>
<div style="position:absolute;left:1377px;top:242px;width:1px;height:2px;background:#3a9a5a;"></div>
<div style="position:absolute;left:1373px;top:244px;width:1px;height:1px;background:#cfcfcf;"></div>
<div style="position:absolute;left:1376px;top:246px;width:6px;height:2px;background:#c0353a;"></div>
<div style="position:absolute;left:1382px;top:246px;width:1px;height:2px;background:#4f88c6;"></div>
<div style="position:absolute;left:1384px;top:246px;width:1px;height:2px;background:#c0353a;"></div>
<div style="position:absolute;left:1376px;top:248px;width:2px;height:1px;background:#4f88c6;"></div>
<div style="position:absolute;left:1373px;top:250px;width:2px;height:1px;background:#cfcfcf;"></div>
<div style="position:absolute;left:1373px;top:253px;width:4px;height:1px;background:#cfcfcf;"></div>
<div style="position:absolute;left:1373px;top:258px;width:2px;height:1px;background:#cfcfcf;"></div>
<div style="position:absolute;left:1377px;top:258px;width:1px;height:2px;background:#3a9a5a;"></div>
<div style="position:absolute;left:1373px;top:260px;width:1px;height:1px;background:#cfcfcf;"></div>
<div style="position:absolute;left:1376px;top:262px;width:2px;height:2px;background:#7061a6;"></div>
<div style="position:absolute;left:1378px;top:262px;width:1px;height:2px;background:#4f88c6;"></div>
<div style="position:absolute;left:1373px;top:265px;width:2px;height:1px;background:#cfcfcf;"></div>
<div style="position:absolute;left:1376px;top:267px;width:1px;height:2px;background:#4f88c6;"></div>
<div style="position:absolute;left:1378px;top:267px;width:1px;height:2px;background:#d78fd7;"></div>
<div style="position:absolute;left:1373px;top:269px;width:1px;height:1px;background:#cfcfcf;"></div>
<div style="position:absolute;left:1376px;top:271px;width:2px;height:2px;background:#7061a6;"></div>
<div style="position:absolute;left:1373px;top:274px;width:2px;height:1px;background:#cfcfcf;"></div></div>
</body></html>
